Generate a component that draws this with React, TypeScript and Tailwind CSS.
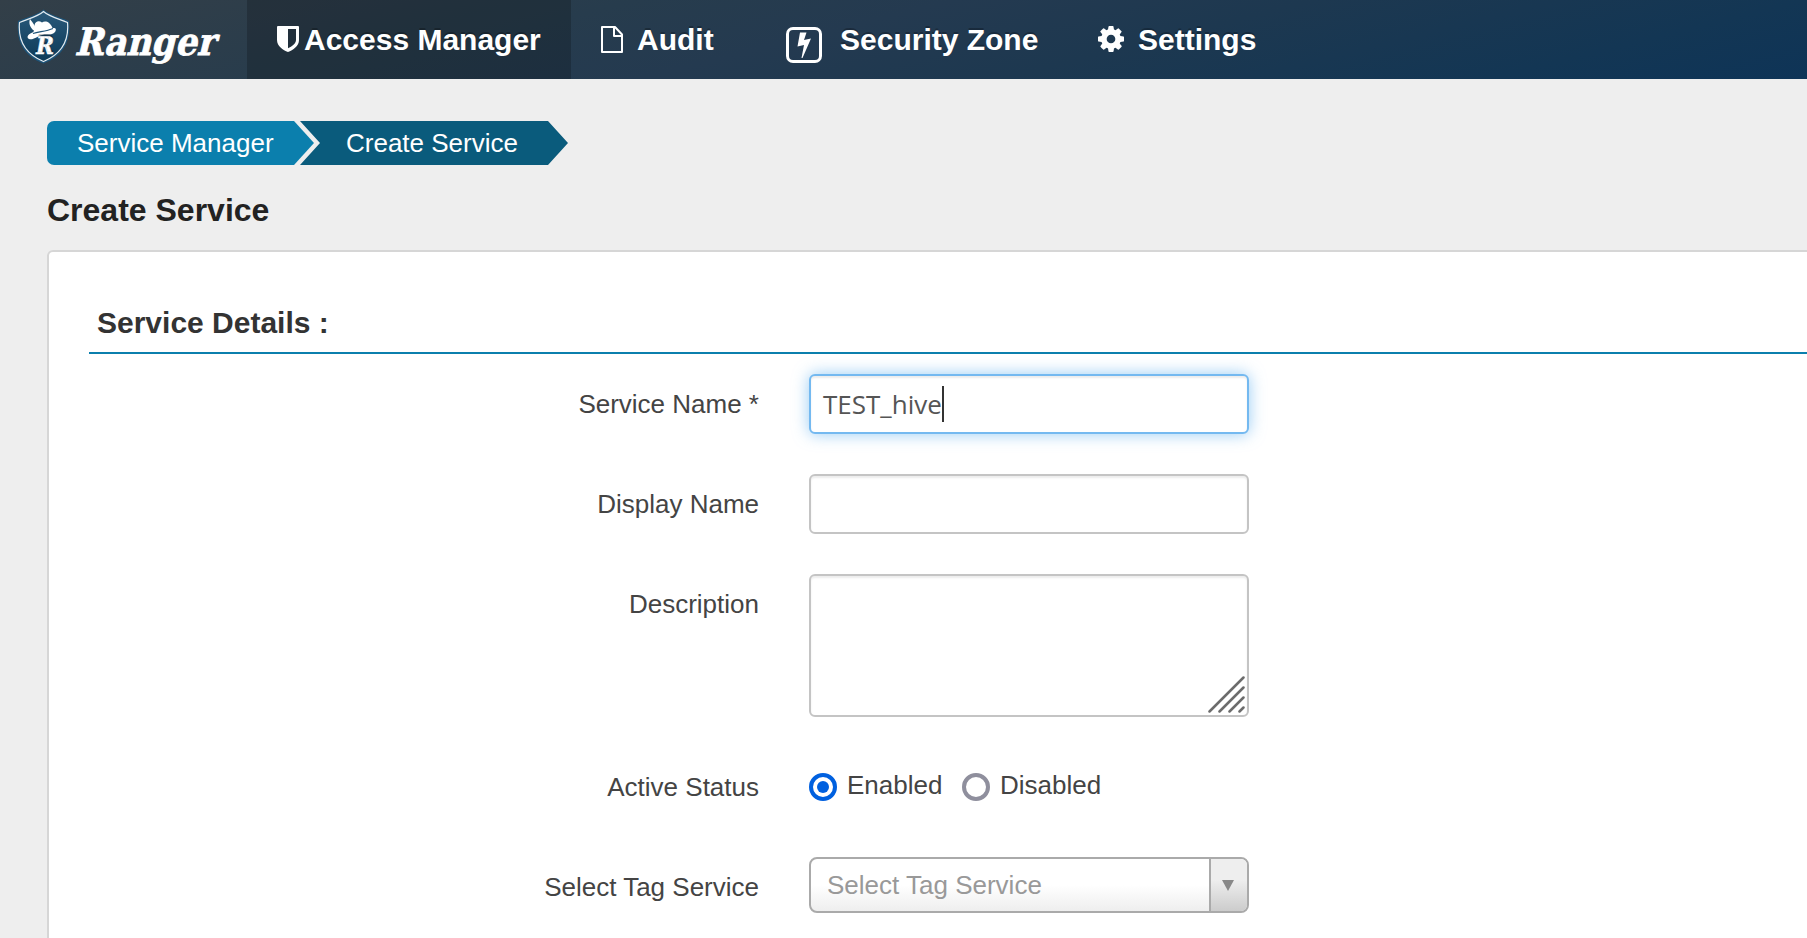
import React from "react";

const arial = "font-['Liberation_Sans',Arial,sans-serif]";

function RangerMark() {
  return (
    <svg width="54" height="56" viewBox="0 0 54 56" className="shrink-0">
      <defs>
        <linearGradient id="shield" x1="0" y1="0" x2="0" y2="1">
          <stop offset="0" stopColor="#29597a" />
          <stop offset="1" stopColor="#0d3a58" />
        </linearGradient>
      </defs>
      <path
        d="M27.500 1.500 C34 7 43 9 53 13 C54.500 31 50 47 27.500 55.500 C5 47 0.500 31 2 13 C12 9 21 7 27.500 1.500Z"
        fill="#1d5378"
      />
      <path
        d="M27.500 3.500 C34 9 42 10.500 51.500 14.500 C53 31 48 45 27.500 53.500 C7 45 2 31 3.500 14.500 C13 10.500 21 9 27.500 3.500Z"
        fill="url(#shield)"
        stroke="#e3ebf0"
        strokeWidth="1.200"
      />
      <path
        d="M17.500 24 L18.500 17 C19.500 13 23 12.500 26 14.500 C29 12.500 34 13.500 36.500 20 C39.500 19.500 41 21 39 24 C36 28 31 25.500 26 27 C20.500 28.500 17 32.500 13 31 C9.500 29 13 25.500 17.500 24Z"
        fill="#fff"
      />
      <path d="M14 11 C17 15 19 17 20 22 L17 22 C14 19 12.500 15 14 11Z" fill="#fff" />
      <path d="M17 25.500 C23 23.500 30 23.500 37 20.500" stroke="#1d5378" strokeWidth="1.200" fill="none" />
      <text
        transform="translate(18.500 45.500) skewX(-10)"
        textLength="18"
        lengthAdjust="spacingAndGlyphs"
        fontFamily="DejaVu Serif, serif"
        fontSize="24"
        fontWeight="700"
        fill="#fff"
        stroke="#fff"
        strokeWidth="0.500"
      >
        R
      </text>
    </svg>
  );
}

function ShieldIcon() {
  return (
    <svg width="22" height="26" viewBox="0 0 22 26" className="shrink-0">
      <path
        fill="#fff"
        fillRule="evenodd"
        d="M1 0H21Q22 0 22 1V14C22 20 16 24 11 26C6 24 0 20 0 14V1Q0 0 1 0ZM11 3V22.300C15 20.500 19 17.500 19 14V3Z"
      />
    </svg>
  );
}

function FileIcon() {
  return (
    <svg width="22" height="27" viewBox="0 0 22 27" className="shrink-0" fill="none" stroke="#fff" strokeWidth="2" strokeLinejoin="round">
      <path d="M1 1H14L21 8.500V26H1Z" />
      <path d="M13 1V10H21" />
    </svg>
  );
}

function BoltBox() {
  return (
    <svg width="36" height="36" viewBox="0 0 36 36" className="shrink-0">
      <rect x="1.500" y="1.500" width="33" height="33" rx="5.500" fill="none" stroke="#fff" strokeWidth="3" />
      <path d="M14 5.500H20.500L18 13L25 11.500L16.500 31H15.500L18 18L11.500 19.500Z" fill="#fff" />
    </svg>
  );
}

function GearIcon() {
  return (
    <svg width="26" height="26" viewBox="0 0 1536 1536" className="shrink-0">
      <path
        fill="#fff"
        d="M1024 768q0-106-75-181t-181-75-181 75-75 181 75 181 181 75 181-75 75-181zm512-109v222q0 12-8 23t-20 13l-185 28q-19 54-39 91 35 50 107 138 10 12 10 25t-9 23q-27 37-99 108t-94 71q-12 0-26-9l-138-108q-44 23-91 38-16 136-29 186-7 28-36 28H657q-14 0-24.500-8.500T621 1506l-28-184q-49-16-90-37l-141 107q-10 9-25 9-14 0-25-11-126-114-165-168-7-10-7-23 0-12 8-23 15-21 51-66.500t54-70.500q-27-50-41-99L29 913q-13-2-21-12.500T0 877V655q0-12 8-23t19-13l186-28q14-46 39-92-40-57-107-138-10-12-10-24 0-10 9-23 26-36 98.500-107.500T337 135q13 0 26 10l138 107q44-23 91-38 16-136 29-186 7-28 36-28h222q14 0 24.500 8.500T915 30l28 184q49 16 90 37l142-107q9-9 24-9 13 0 25 10 129 119 165 170 7 8 7 22 0 12-8 23-15 21-51 66.500t-54 70.500q26 50 41 98l183 28q13 2 21 12.500t8 23.500z"
      />
    </svg>
  );
}

function Label({ children }: { children: React.ReactNode }) {
  return <label className="mt-[15px] w-[670px] shrink-0 text-right text-[26px] leading-[30px] text-[#444]">{children}</label>;
}

const field = "h-[60px] w-[440px] rounded-[6px] border-2 bg-white";

export default function App() {
  return (
    <div className={`${arial} flex h-[938px] w-[1807px] flex-col overflow-hidden bg-[#eee]`}>
      <header className="flex h-[79px] shrink-0 bg-[linear-gradient(166deg,#333f48_0%,#273c4d_30%,#243a50_45%,#1d3850_62%,#133654_85%,#0e3457_100%)] text-[30px] leading-[34px] font-bold text-white [text-shadow:0_-2px_0_rgba(0,0,0,0.25)]">
        <div className="flex w-[247px] shrink-0 pt-[8px] pl-[16px]">
          <RangerMark />
          <svg width="160" height="66" viewBox="0 0 160 66" className="ml-[5px] shrink-0 overflow-visible [text-shadow:none]">
            <text
              transform="translate(-0.500 46.500) skewX(-14)"
              textLength="140"
              lengthAdjust="spacingAndGlyphs"
              fontFamily="DejaVu Serif, serif"
              fontSize="38"
              fontWeight="700"
              fill="#fff"
              stroke="#fff"
              strokeWidth="0.800"
            >
              Ranger
            </text>
          </svg>
        </div>
        <nav className="flex">
          <a className="flex w-[324px] bg-black/20 pt-[23px] pl-[30px]">
            <span className="mt-[3px] mr-[5px]"><ShieldIcon /></span>
            Access Manager
          </a>
          <a className="flex w-[184px] pt-[23px] pl-[30px]">
            <span className="mt-[3px] mr-[14px]"><FileIcon /></span>
            Audit
          </a>
          <a className="flex w-[320px] pt-[23px] pl-[31px]">
            <span className="mt-[4px] mr-[18px]"><BoltBox /></span>
            Security Zone
          </a>
          <a className="flex pt-[23px] pl-[23px]">
            <span className="mt-[3px] mr-[14px]"><GearIcon /></span>
            Settings
          </a>
        </nav>
      </header>

      <ul className="mt-[42px] ml-[47px] flex h-[44px] text-[26px] leading-[44px] text-white">
        <li className="w-[267px] rounded-l-[7px] bg-[#0b7fad] pl-[30px] [clip-path:polygon(0_0,247px_0,100%_50%,247px_100%,0_100%)]">Service Manager</li>
        <li className="-ml-[14px] w-[268px] bg-[#0a5b7c] pl-[46px] [clip-path:polygon(0_0,248px_0,100%_50%,248px_100%,0_100%,20px_50%)]">Create Service</li>
      </ul>
      <h3 className="mt-[25px] ml-[47px] text-[32px] leading-[40px] font-bold text-[#222]">Create Service</h3>

      <section className="mt-[20px] ml-[47px] h-[720px] w-[1800px] shrink-0 rounded-[6px] border-2 border-[#d6d6d6] bg-white pt-[48px] pl-[40px]">
        <h4 className="h-[54px] border-b-2 border-[#0b7fad] pl-[8px] text-[30px] leading-[46px] font-bold text-[#333]">Service Details :</h4>
        <form className="mt-[20px] flex flex-col">
          <div className="mb-[40px] flex gap-[50px]">
            <Label>Service Name *</Label>
            <div className={`${field} flex items-center border-[#74b9f0] pl-[12px] font-['Open_Sans',sans-serif] text-[26px] text-[#555] shadow-[inset_0_2px_2px_rgba(0,0,0,0.075),0_0_16px_rgba(82,168,236,0.6)]`}>
              TEST_hive<span className="h-[36px] w-[2px] bg-[#333]" />
            </div>
          </div>
          <div className="mb-[40px] flex gap-[50px]">
            <Label>Display Name</Label>
            <div className={`${field} border-[#c4c4c4] shadow-[inset_0_2px_2px_rgba(0,0,0,0.075)]`} />
          </div>
          <div className="mb-[40px] flex gap-[50px]">
            <Label>Description</Label>
            <div className="flex h-[143px] w-[440px] items-end justify-end rounded-[6px] border-2 border-[#c4c4c4] bg-white pr-[2px] pb-[2px] shadow-[inset_0_2px_2px_rgba(0,0,0,0.075)]">
              <svg width="37" height="37" viewBox="0 0 37 37" stroke="#6c6c6c" strokeWidth="2.500" strokeLinecap="round">
                <path d="M1.500 35.500L35.500 1.500M11.500 35.500L35.500 11.500M21.500 35.500L35.500 21.500M31.500 35.500L35.500 31.500" />
              </svg>
            </div>
          </div>
          <div className="flex h-[100px] gap-[50px]">
            <Label>Active Status</Label>
            <div className="flex pt-[13px] text-[26px] leading-[30px] text-[#444]">
              <span className="mt-[3px] mr-[10px] flex size-[28px] items-center justify-center rounded-full border-4 border-[#0060df]">
                <span className="size-[12px] rounded-full bg-[#0060df]" />
              </span>
              <span className="w-[115px]">Enabled</span>
              <span className="mt-[3px] mr-[10px] size-[28px] rounded-full border-4 border-[#8f8f9d]" />
              Disabled
            </div>
          </div>
          <div className="flex gap-[50px]">
            <Label>Select Tag Service</Label>
            <div className="flex h-[56px] w-[440px] overflow-hidden rounded-[8px] border-2 border-[#aaa] bg-[linear-gradient(to_top,#eee_0%,#fff_50%)] text-[26px] leading-[52px] text-[#999]">
              <span className="grow pl-[16px]">Select Tag Service</span>
              <span className="flex w-[38px] items-center justify-center border-l-2 border-[#aaa] bg-[linear-gradient(to_top,#ccc_0%,#eee_60%)] pr-[2px]">
                <svg width="12" height="11" viewBox="0 0 12 11"><path d="M0 0H12L6 11Z" fill="#888" /></svg>
              </span>
            </div>
          </div>
        </form>
      </section>
    </div>
  );
}
